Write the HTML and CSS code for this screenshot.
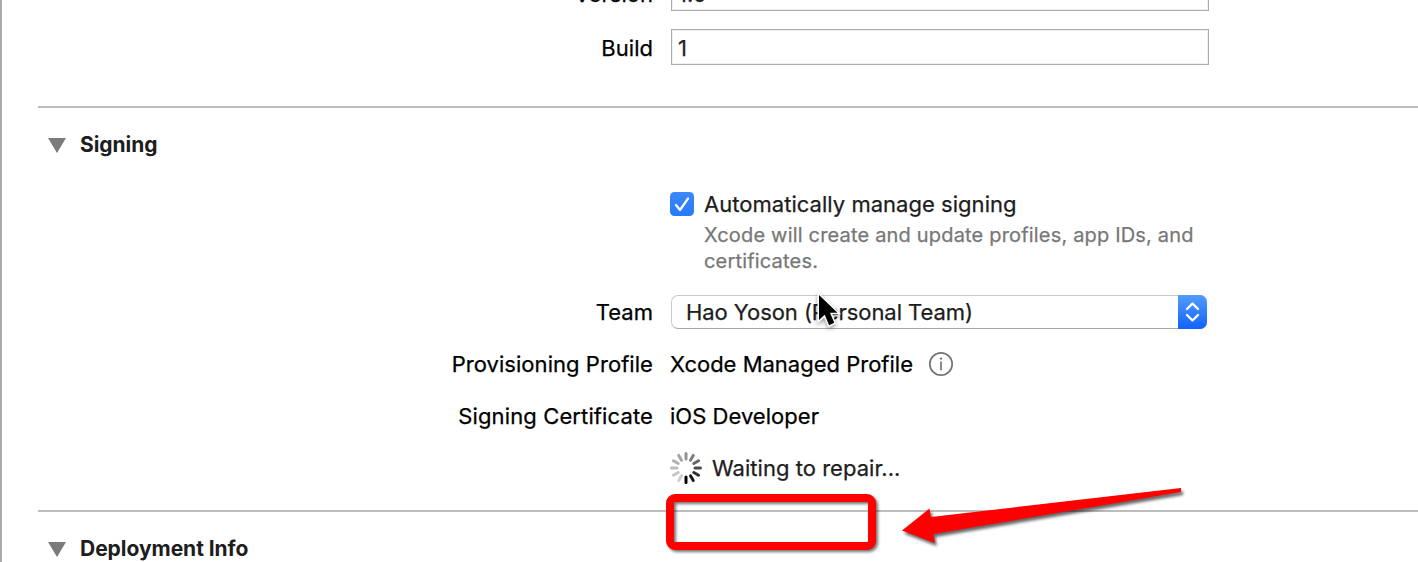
FILE: index.html
```html
<!DOCTYPE html>
<html lang="en">
<head>
<meta charset="utf-8">
<title>Signing</title>
<link rel="stylesheet" href="styles.css">
</head>
<body>
<main class="editor">
  <section class="identity">
    <div class="row field-row"><span class="label">Version</span><div class="field">1.0</div></div>
    <div class="row field-row"><span class="label">Build</span><div class="field">1</div></div>
  </section>
  <section class="section signing">
    <h2 class="heading"><svg class="disclosure" width="18" height="15" viewBox="0 0 18 15"><path d="M0 0H18L9 15Z" fill="#7b7b7b"/></svg><span>Signing</span></h2>
    <div class="row auto-row">
      <div class="auto">
        <svg class="check" width="24" height="24" viewBox="0 0 24 24"><defs><linearGradient id="cb" x2="0" y2="1"><stop stop-color="#3b87fb"/><stop offset="1" stop-color="#2979fb"/></linearGradient></defs><rect width="24" height="24" rx="4.5" fill="url(#cb)"/><path d="M6 13L10 18L18 6.5" fill="none" stroke="#fff" stroke-width="2.2" stroke-linecap="round" stroke-linejoin="round"/></svg>
        <div class="auto-text"><div class="auto-title">Automatically manage signing</div><p class="hint">Xcode will create and update profiles, app IDs, and certificates.</p></div>
      </div>
    </div>
    <div class="row team-row"><span class="label team">Team</span>
      <div class="select"><span class="select-text">Hao Yoson (Personal Team)</span><span class="stepper"><svg width="29" height="34" viewBox="0 0 29 34"><path d="M9 14L14.5 8.5L20 14M9 20L14.5 25.5L20 20" fill="none" stroke="#fff" stroke-width="2.4" stroke-linecap="round" stroke-linejoin="round"/></svg></span></div>
    </div>
    <div class="row info-row"><span class="label prov">Provisioning Profile</span><div class="value"><span class="managed">Xcode Managed Profile</span>
      <svg class="info" width="26" height="26" viewBox="0 0 26 26"><circle cx="13" cy="13" r="11.2" fill="none" stroke="#747474" stroke-width="1.7"/><circle cx="13" cy="7.6" r="1.2" fill="#747474"/><path d="M13 10.4V19.2" stroke="#747474" stroke-width="1.7"/></svg></div></div>
    <div class="row info-row"><span class="label cert">Signing Certificate</span><div class="value"><span class="ios">iOS Developer</span></div></div>
    <div class="row info-row"><span></span><div class="value">
      <svg class="spinner" width="32" height="32" viewBox="-16 -16 32 32" fill="none" stroke-width="3" stroke-linecap="round"><path d="M0-9V-14.5" stroke="#929292"/><path d="M0-9V-14.5" stroke="#7d7d7d" transform="rotate(30)"/><path d="M0-9V-14.5" stroke="#656565" transform="rotate(60)"/><path d="M0-9V-14.5" stroke="#4b4b4b" transform="rotate(90)"/><path d="M0-9V-14.5" stroke="#303030" transform="rotate(120)"/><path d="M0-9V-14.5" stroke="#181818" transform="rotate(150)"/><path d="M0-9V-14.5" stroke="#000" transform="rotate(180)"/><path d="M0-9V-14.5" stroke="#cdcdcd" transform="rotate(210)"/><path d="M0-9V-14.5" stroke="#c7c7c7" transform="rotate(240)"/><path d="M0-9V-14.5" stroke="#bdbdbd" transform="rotate(270)"/><path d="M0-9V-14.5" stroke="#b1b1b1" transform="rotate(300)"/><path d="M0-9V-14.5" stroke="#a3a3a3" transform="rotate(330)"/></svg>
      <span class="waiting">Waiting to repair...</span></div></div>
  </section>
  <section class="section deployment">
    <h2 class="heading"><svg class="disclosure" width="18" height="15" viewBox="0 0 18 15"><path d="M0 0H18L9 15Z" fill="#7b7b7b"/></svg><span class="deploy">Deployment Info</span></h2>
  </section>
  <svg class="cursor" width="28" height="42" viewBox="0 0 28 42"><path d="M4 3V28L9.7 22.8L14.1 33.2L19.3 30.8L15 20.8H22.5Z" fill="#000" stroke="#fff" stroke-width="3" stroke-linejoin="miter" paint-order="stroke"/></svg>
  <div class="callout"></div>
  <svg class="arrow" width="300" height="72" viewBox="0 0 300 72"><path d="M7 51.5L34.5 29.5L36 38L286 9V13L38.5 55L39.8 64Z" fill="#f00"/></svg>
</main>
</body>
</html>
```

FILE: styles.css
```css
* { box-sizing: border-box; }
body { margin: 0; background: #fff; }
.editor {
  position: relative;
  width: 1418px;
  height: 562px;
  overflow: hidden;
  padding-left: 36px;
  border-left: 2px solid #aaa;
  font: 400 22px/26px Inter, "Liberation Sans", sans-serif;
  letter-spacing: 0.03px;
  -webkit-text-stroke-width: 0.25px;
  color: #000;
}
.row { display: grid; grid-template-columns: 615px 1fr; column-gap: 17px; align-items: center; }
.label { text-align: right; white-space: nowrap; }
.identity { display: flex; flex-direction: column; gap: 18px; margin-top: -25px; height: 131px; }
.field-row { height: 36px; }
.field-row .label { padding-top: 2px; }
.field { width: 538px; height: 36px; padding: 5px 6px; margin-left: 1px; border: 1px solid #adadad; box-shadow: inset 0 0 0 1px #f0f0f0; color: #222; }
.section { border-top: 2px solid #bdbdbd; }
.signing { height: 404px; }
.heading { display: flex; align-items: center; gap: 14px; height: 26px; margin: 24px 0 0 10px; font-size: 21px; font-weight: 700; letter-spacing: -0.04px; -webkit-text-stroke-width: 0; color: #1d1d1d; }
.disclosure { display: block; }
.auto-row { margin-top: 33px; height: 104px; align-items: start; }
.auto { grid-column: 2; display: flex; gap: 10px; }
.check { margin-top: 1px; flex: none; }
.auto-text { width: 520px; }
.auto-title { color: #1d1d1d; margin-bottom: 5px; }
.hint { margin: 0; font-size: 20px; letter-spacing: 0.18px; color: #777; }
.team-row { height: 34px; }
.select { display: flex; justify-content: space-between; width: 536px; height: 34px; margin-left: 1px; border: 1px solid #cacaca; border-bottom-color: #aaa; border-right: 0; border-radius: 7px; color: #1d1d1d; }
.select-text { padding: 3px 0 0 14px; letter-spacing: -0.06px; }
.stepper { width: 29px; height: 34px; margin-top: -1px; border-radius: 0 7px 7px 0; background: linear-gradient(#529cf9, #1062fb); }
.stepper svg { display: block; }
.info-row { height: 52px; }
.team-row + .info-row { margin-top: 9px; }
.value { display: flex; align-items: center; white-space: nowrap; }
.prov { letter-spacing: 0.05px; }
.cert { letter-spacing: 0.12px; }
.managed { width: 243px; letter-spacing: 0; }
.info { margin-left: 15px; }
.spinner { margin-right: 10px; }
.waiting { color: #1d1d1d; }
.cursor { position: absolute; left: 813px; top: 292px; filter: drop-shadow(0 2px 2px rgba(0,0,0,.4)); }
.callout { position: absolute; left: 664px; top: 494px; width: 210px; height: 56px; border: 8px solid #f00; border-radius: 9px; filter: drop-shadow(2px 2px 1.5px rgba(0,0,0,.55)); }
.arrow { position: absolute; left: 893px; top: 479px; filter: drop-shadow(2px 3px 1.5px rgba(0,0,0,.6)); }
```
